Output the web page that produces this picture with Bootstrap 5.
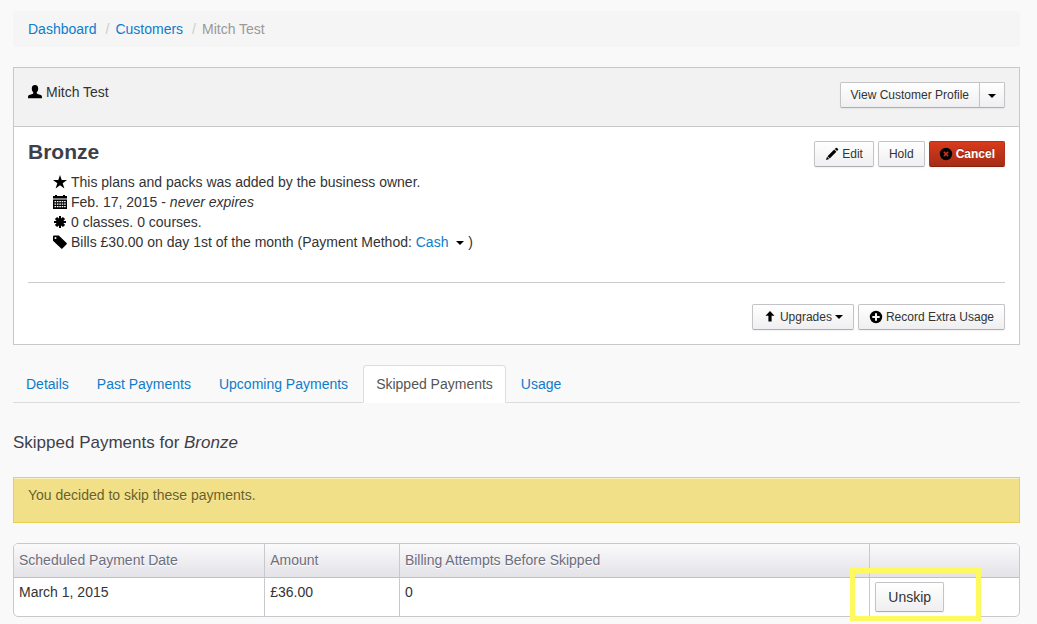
<!DOCTYPE html>
<html lang="en">
<head>
<meta charset="utf-8">
<meta name="viewport" content="width=device-width, initial-scale=1">
<title>Mitch Test</title>
<link href="https://cdn.jsdelivr.net/npm/bootstrap@5.3.0/dist/css/bootstrap.min.css" rel="stylesheet">
<style>
  body { font-family: "Liberation Sans", Arial, sans-serif; font-size: 14px; line-height: 20px; color: #333; background: #f9f9f9; }
  a { color: #0e7ccb; text-decoration: none; }
  .page-wrap { padding: 11px 17px 7px 13px; }
  .breadcrumb { --bs-breadcrumb-font-size: 14px; background: #f5f5f5; padding: 8px 15px; margin-bottom: 20px; border-radius: 4px; }
  .breadcrumb-item + .breadcrumb-item { padding-left: 9px; }
  .breadcrumb-item + .breadcrumb-item::before { color: #ccc; padding-right: 6px; }
  .breadcrumb-item.active { color: #999; }
  .plan-card { border: 1px solid #c8c8cb; border-radius: 0; margin-bottom: 20px; color: #333; }
  .plan-card .card-header { background: #f2f2f2; border-bottom: 1px solid #c8c8cb; border-radius: 0; padding: 14px 14px 18px; }
  .plan-card .card-body { padding: 14px; }
  .ico { width: 14px; height: 14px; fill: #000; flex: none; }
  .btn { --bs-btn-font-size: 14px; --bs-btn-line-height: 20px; --bs-btn-padding-x: 12px; --bs-btn-padding-y: 4px; --bs-btn-border-radius: 2px;
         --bs-btn-color: #333; --bs-btn-border-color: #c4c4c6; --bs-btn-hover-color: #333; --bs-btn-hover-border-color: #aaa;
         background: linear-gradient(#fff, #efeff1); border-bottom-color: #aeaeb2; box-shadow: 0 1px 2px rgba(0,0,0,.06); }
  .btn-sm { --bs-btn-font-size: 12px; --bs-btn-padding-x: 10px; --bs-btn-padding-y: 2px; --bs-btn-border-radius: 2px; }
  .btn-icon { display: flex; align-items: center; gap: 3px; }
  .btn-cancel { --bs-btn-padding-x: 9px; --bs-btn-color: #fff; --bs-btn-hover-color: #fff; --bs-btn-border-color: #b3311a; background: linear-gradient(#d93a1c, #a52c16); border-bottom-color: #85210f; font-weight: 700; text-shadow: 0 -1px 0 rgba(0,0,0,.25); }
  .caret-only { --bs-btn-padding-x: 8px; }
  .caret-mark { display: inline-block; border: 4px solid transparent; border-top-color: #000; border-bottom: 0; vertical-align: middle; }
  .plan-name { font-size: 21px; line-height: 22px; font-weight: 700; color: #3e3f4b; }
  .plan-facts { margin: 9px 0 0 25px; }
  .plan-facts li { display: flex; align-items: center; gap: 4px; }
  .plan-card hr { margin: 30px 0 21px; border-color: #ccc; opacity: 1; }
  .nav-tabs { --bs-nav-tabs-border-color: #ddd; --bs-nav-tabs-border-radius: 4px; --bs-nav-tabs-link-active-color: #555; --bs-nav-tabs-link-active-border-color: #ddd #ddd #fff; gap: 2px; margin-bottom: 30px; }
  .nav-tabs .nav-link { padding: 8px 12px; line-height: 20px; color: #0e7ccb; }
  .nav-tabs .nav-link.active { color: #555; }
  .section-title { font-size: 17px; line-height: 20px; font-weight: 400; color: #3e3f4b; margin-bottom: 24px; }
  .skip-note { background: #f1e088; border: 1px solid #ead04f; border-radius: 0; color: #6c5f22; padding: 7px 14px 17px; margin-bottom: 20px; box-shadow: inset 0 1px 0 #f8f0c3; text-shadow: 0 1px 0 rgba(255,255,255,.3); }
  .pay-table { table-layout: fixed; border: 1px solid #c8c8cd; border-radius: 5px; border-collapse: separate; border-spacing: 0; background: #fff; margin: 0; }
  .pay-table th, .pay-table td { padding: 4px 5px; text-align: left; vertical-align: top; }
  .pay-table th { font-weight: 400; color: #6d6d7d; padding: 6px 5px 7px; height: 34px; background: linear-gradient(#fafafb, #e3e3e8); border-bottom: 1px solid #c0bfc8; text-shadow: 0 1px 0 #fff; }
  .pay-table th + th, .pay-table td + td { border-left: 1px solid #c8c8cd; }
  .pay-table th:first-child { border-top-left-radius: 4px; }
  .pay-table th:last-child { border-top-right-radius: 4px; }
  .col-date { width: 24.9%; } .col-sum { width: 13.4%; } .col-act { width: 14.9%; }
  .callout-frame { position: absolute; inset: -14px -37px -9px -25px; border: 5px solid #fff960; pointer-events: none; }
</style>
</head>
<body>
<main class="page-wrap">
  <nav aria-label="breadcrumb">
    <ol class="breadcrumb">
      <li class="breadcrumb-item"><a href="#">Dashboard</a></li>
      <li class="breadcrumb-item"><a href="#">Customers</a></li>
      <li class="breadcrumb-item active" aria-current="page">Mitch Test</li>
    </ol>
  </nav>

  <section class="card plan-card">
    <div class="card-header d-flex justify-content-between align-items-start">
      <div class="d-flex align-items-center gap-1">
        <svg class="ico" viewBox="0 0 14 14"><path d="M7 0C4.800 0 3.800 1.300 3.800 3.400c0 1.800.5 3 1.400 3.800v1.400C4.800 9.600 1 9.700.300 10.800 0 11.500 0 12.700 0 13.300h14c0-.6 0-1.800-.3-2.500C13 9.700 9.200 9.600 8.800 8.600V7.200c.9-.8 1.400-2 1.400-3.800C10.200 1.300 9.200 0 7 0z"/></svg>
        <span>Mitch Test</span>
      </div>
      <div class="btn-group">
        <button type="button" class="btn btn-sm">View Customer Profile</button>
        <button type="button" class="btn btn-sm caret-only" aria-label="More profile options"><span class="caret-mark"></span></button>
      </div>
    </div>
    <div class="card-body">
      <div class="d-flex justify-content-between align-items-start">
        <div>
          <h1 class="plan-name m-0">Bronze</h1>
          <ul class="list-unstyled plan-facts">
            <li><svg class="ico" viewBox="0 0 14 14"><path d="M7 0l1.700 5.100H14L9.700 8.300l1.700 5.200L7 10.300l-4.400 3.200 1.700-5.200L0 5.100h5.300z"/></svg><span>This plans and packs was added by the business owner.</span></li>
            <li><svg class="ico" viewBox="0 0 14 14"><path fill-rule="evenodd" d="M0 1h2V0h2v1h6V0h2v1h2v2.500H0zM0 4.500h14V14H0zM1.500 6v1.200h1.600V6zm2.400 0v1.200h1.600V6zm2.400 0v1.200h1.600V6zm2.400 0v1.200h1.600V6zm2.400 0v1.200h1.600V6zM1.500 8.500v1.200h1.600V8.500zm2.400 0v1.200h1.600V8.500zm2.400 0v1.200h1.600V8.500zm2.400 0v1.200h1.600V8.500zm2.400 0v1.200h1.600V8.500zM1.500 11v1.200h1.600V11zm2.400 0v1.200h1.600V11zm2.400 0v1.200h1.600V11zm2.400 0v1.200h1.600V11zm2.400 0v1.200h1.600V11z"/></svg><span>Feb. 17, 2015 - <em>never expires</em></span></li>
            <li><svg class="ico" viewBox="0 0 14 14"><path d="M6 1h2v2.600L9.900 1.900l2.200 2.200L10.400 6H13v2h-2.600l1.700 1.900-2.200 2.200L8 10.400V13H6v-2.600l-1.900 1.700-2.200-2.200L3.600 8H1V6h2.600L1.900 4.100l2.200-2.200L6 3.600z"/></svg><span>0 classes. 0 courses.</span></li>
            <li><svg class="ico" viewBox="0 0 14 14"><path fill-rule="evenodd" d="M0 1.500Q0 .5 1 .5h4.800L13.600 8q.6.600 0 1.200l-4.200 4.200q-.6.600-1.200 0L0 5.800zM2.500 1.900a1 1 0 1 0 0 2 1 1 0 0 0 0-2z"/></svg><span>Bills £30.00 on day 1st of the month (Payment Method: <a href="#">Cash <span class="caret-mark ms-1 me-1"></span></a>)</span></li>
          </ul>
        </div>
        <div class="d-flex gap-1">
          <button type="button" class="btn btn-sm btn-icon"><svg class="ico" viewBox="0 0 14 14"><path d="M10.800 1q.6-.5 1.200 0l1 1q.6.600 0 1.100l-1 1-2.200-2.200zM9.200 2.500l2.200 2.200-6.700 6.700-2.200-2.200zM2 9.800l2.200 2.200L1 13z"/></svg>Edit</button>
          <button type="button" class="btn btn-sm">Hold</button>
          <button type="button" class="btn btn-sm btn-cancel btn-icon"><svg class="ico" viewBox="0 0 14 14"><path fill-rule="evenodd" d="M7 .8a6.200 6.200 0 1 0 0 12.400A6.200 6.200 0 0 0 7 .8zM5.500 4.300L7 5.800l1.500-1.500 1.200 1.200L8.200 7l1.500 1.500-1.200 1.200L7 8.200 5.500 9.700 4.300 8.500 5.800 7 4.300 5.500z"/></svg>Cancel</button>
        </div>
      </div>
      <hr>
      <div class="d-flex justify-content-end gap-1">
        <button type="button" class="btn btn-sm btn-icon"><svg class="ico" viewBox="0 0 14 14"><path d="M7 1l4.500 4.800H8.600V11.500H5.400V5.800H2.500z"/></svg>Upgrades<span class="caret-mark"></span></button>
        <button type="button" class="btn btn-sm btn-icon"><svg class="ico" viewBox="0 0 14 14"><path fill-rule="evenodd" d="M7 .8a6.200 6.200 0 1 0 0 12.400A6.200 6.200 0 0 0 7 .8zM6 3.300h2V6h2.700v2H8v2.700H6V8H3.300V6H6z"/></svg>Record Extra Usage</button>
      </div>
    </div>
  </section>

  <ul class="nav nav-tabs">
    <li class="nav-item"><a class="nav-link" href="#">Details</a></li>
    <li class="nav-item"><a class="nav-link" href="#">Past Payments</a></li>
    <li class="nav-item"><a class="nav-link" href="#">Upcoming Payments</a></li>
    <li class="nav-item"><a class="nav-link active" aria-current="page" href="#">Skipped Payments</a></li>
    <li class="nav-item"><a class="nav-link" href="#">Usage</a></li>
  </ul>

  <h2 class="section-title">Skipped Payments for <em>Bronze</em></h2>
  <div class="alert skip-note" role="status">You decided to skip these payments.</div>

  <table class="pay-table w-100">
    <thead>
      <tr><th class="col-date" scope="col">Scheduled Payment Date</th><th class="col-sum" scope="col">Amount</th><th scope="col">Billing Attempts Before Skipped</th><th class="col-act"></th></tr>
    </thead>
    <tbody>
      <tr><td>March 1, 2015</td><td>£36.00</td><td>0</td>
        <td><div class="position-relative d-inline-block"><button type="button" class="btn">Unskip</button><span class="callout-frame"></span></div></td></tr>
    </tbody>
  </table>
</main>
<script src="https://cdn.jsdelivr.net/npm/bootstrap@5.3.0/dist/js/bootstrap.bundle.min.js"></script>
</body>
</html>
